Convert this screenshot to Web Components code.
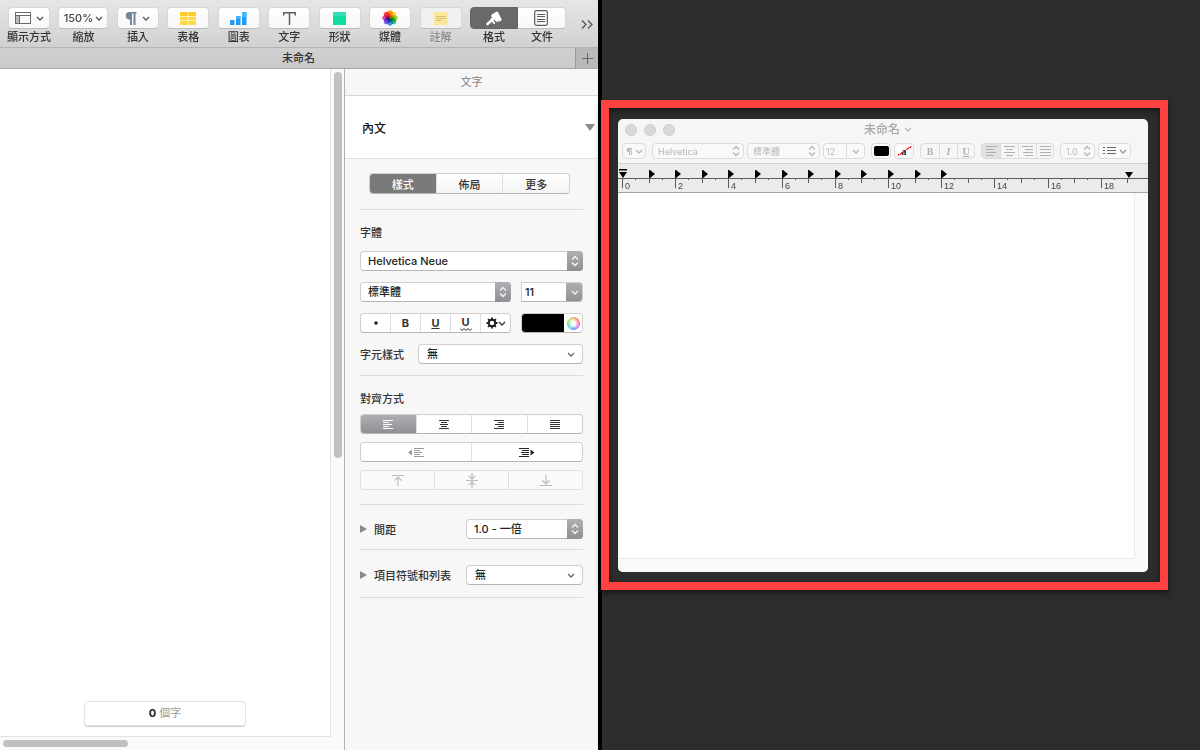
<!DOCTYPE html>
<html lang="zh-Hant">
<head>
<meta charset="utf-8">
<title>未命名</title>
<style>
  body {
    margin: 0;
    min-height: 100vh;
    display: grid;
    grid-template-columns: minmax(0, 1fr) minmax(0, 1fr);
    background: #2d2d2d;
    font-family: Inter, "Noto Sans CJK TC", sans-serif;
    font-size: 11px;
    color: #333;
    overflow: hidden;
  }
</style>
</head>
<body>

<pages-window></pages-window>
<desk-area>
  <highlight-frame>
    <text-window></text-window>
  </highlight-frame>
</desk-area>

<script>
const ICONS = {
  view: [16, 12, '<rect x=".5" y=".5" width="15" height="11" fill="none" stroke="#6a6a6a"/><path d="M1 3.500h14M4.500 4v7" stroke="#6a6a6a"/><rect x="1" y="4" width="3" height="7" fill="#bbb"/>'],
  chevron: [8, 5, '<path d="M1 1l3 3 3-3" fill="none" stroke="currentColor" stroke-width="1.300"/>'],
  updown: [8, 12, '<path d="M1 4.500l3-3 3 3M1 7.500l3 3 3-3" fill="none" stroke="currentColor" stroke-width="1.400"/>'],
  pilcrow: [12, 13, '<path d="M11.500 0H4.500a3.700 3.700 0 0 0 0 7.400H5V13h2V1.500h1.500V13h2V1.500h1z" fill="#74859a"/>'],
  pilcrowSmall: [6, 7, '<path d="M6 0H2.500a2 2 0 0 0 0 4H3v3h1V1h.8v6h.9V1H6z" fill="currentColor"/>'],
  table: [16, 13, '<rect width="16" height="13" fill="#ffd84a"/><rect width="16" height="4" fill="#ffc928"/><path d="M0 4.500h16M0 8.500h16M8 0v13" stroke="#fff3b5"/>'],
  chart: [17, 13, '<path d="M0 8h4.500v5H0zM6 4h4.500v9H6zM12 0h4.500v13H12z" fill="#219cf2"/><path d="M12 0h4.500v5H12zM6 4h4.500v3H6z" fill="#43b8fa"/>'],
  text: [13, 13, '<path d="M.7 3.500V.8h11.600v2.700M6.500 1v12" fill="none" stroke="#606060" stroke-width="1.500"/>'],
  shape: [13, 13, '<rect width="13" height="13" fill="#10dba0"/><path d="M0 0h13v4H0z" fill="#35dfb6"/>'],
  media: [16, 16, ['#ff9a1c', '#ffdc1f', '#9bd62e', '#2fbf7a', '#35a0f2', '#7a5ce8', '#d34fc4', '#fa3c4c'].map((c, i) =>
    `<ellipse cx="8" cy="4" rx="2.800" ry="3.700" fill="${c}" style="mix-blend-mode:multiply" transform="rotate(${i * 45} 8 8)"/>`).join('')],
  note: [14, 13, '<rect width="14" height="13" fill="#fde79a"/><path d="M2 4.500h10M2 6.500h10M2 8.500h6" stroke="#d3bf80"/>'],
  brush: [16, 15, '<path d="M8.300 6.800L5.500 9.500 1.500 13" fill="none" stroke="#fff" stroke-width="2.600" stroke-linecap="round"/><path d="M5.500 8l2.700 4.300" stroke="#fff" stroke-width="1.800" stroke-linecap="round"/><path d="M5.500 3.800L9.800.9q1.500-.8 2.400.5l3.500 7.200-.9 1.800-1.200-1.200-.1 2.100-1.700-1.500-.5 1.600-1.900-1.300L5 5.200z" fill="#fff"/>'],
  document: [14, 16, '<rect x=".7" y=".7" width="12.600" height="14.600" rx="1.500" fill="none" stroke="#5c5c5c" stroke-width="1.200"/><path d="M3 4.500h8M3 6.500h8M3 9.500h8M3 11.500h8" stroke="#5c5c5c"/>'],
  more: [12, 9, '<path d="M1 .5l4 4-4 4M7 .5l4 4-4 4" fill="none" stroke="#555" stroke-width="1.300"/>'],
  plus: [11, 11, '<path d="M5.500 0v11M0 5.500h11" stroke="#666"/>'],
  disclosure: [7, 8, '<path d="M0 0l7 4-7 4z" fill="#8a8a8a"/>'],
  styleArrow: [10, 7, '<path d="M0 0h10L5 7z" fill="#8b8b8b"/>'],
  dot: [4, 4, '<circle cx="2" cy="2" r="1.800" fill="#222"/>'],
  gear: [12, 12, '<circle cx="6" cy="6" r="3.200" fill="none" stroke="#1c1c1c" stroke-width="1.900"/><path d="M6 .5v2M6 9.500v2M.5 6h2M9.500 6h2M2.100 2.100l1.400 1.400M8.500 8.500l1.400 1.400M9.900 2.100L8.500 3.500M3.500 8.500l-1.400 1.400" stroke="#1c1c1c" stroke-width="1.800"/>'],
  wave: [12, 3, '<path d="M0 .5l2 2 2-2 2 2 2-2 2 2 2-2" fill="none" stroke="#222"/>'],
  left: [10, 9, '<path d="M0 .5h10M0 2.500h6M0 4.500h9M0 6.500h6M0 8.500h10" stroke="currentColor"/>'],
  center: [10, 9, '<path d="M0 .5h10M2 2.500h6M1 4.500h8M2 6.500h6M0 8.500h10" stroke="currentColor"/>'],
  right: [10, 9, '<path d="M0 .5h10M4 2.500h6M1 4.500h9M4 6.500h6M0 8.500h10" stroke="currentColor"/>'],
  justify: [10, 9, '<path d="M0 .5h10M0 2.500h10M0 4.500h10M0 6.500h10M0 8.500h10" stroke="currentColor"/>'],
  outdent: [16, 9, '<path d="M6 .5h10M6 2.500h6M6 4.500h8M6 6.500h6M6 8.500h10" stroke="#999"/><path d="M4 1.500v6l-4-3z" fill="#999"/>'],
  indent: [16, 9, '<path d="M0 .5h10M3 2.500h7M2 4.500h8M3 6.500h7M0 8.500h10" stroke="#222"/><path d="M11.500 1.500v6l4-3z" fill="#222"/>'],
  top: [12, 11, '<path d="M0 .5h12M6 11V2M2.500 5.500L6 2l3.500 3.500" fill="none" stroke="#bbb" stroke-width="1.200"/>'],
  middle: [12, 15, '<path d="M0 7.500h12M6 0v15M3 3l3 3 3-3M3 12l3-3 3 3" fill="none" stroke="#bbb" stroke-width="1.200"/>'],
  bottom: [12, 11, '<path d="M0 10.500h12M6 0v9M2.500 5.500L6 9l3.500-3.500" fill="none" stroke="#bbb" stroke-width="1.200"/>'],
  leftWide: [11, 10, '<path d="M0 .5h11M0 3.500h8M0 6.500h10M0 9.500h8" stroke="currentColor"/>'],
  centerWide: [11, 10, '<path d="M0 .5h11M2 3.500h7M0 6.500h11M2 9.500h7" stroke="currentColor"/>'],
  rightWide: [11, 10, '<path d="M0 .5h11M3 3.500h8M1 6.500h10M3 9.500h8" stroke="currentColor"/>'],
  justifyWide: [11, 10, '<path d="M0 .5h11M0 3.500h11M0 6.500h11M0 9.500h11" stroke="currentColor"/>'],
  list: [13, 8, '<path d="M0 .5h2M4 .5h9M0 3.500h2M4 3.500h9M0 6.500h2M4 6.500h9" stroke="#666" stroke-width="1.200"/>']
};

class MacIcon extends HTMLElement {
  connectedCallback() {
    const [w, h, body] = ICONS[this.getAttribute('name')];
    this.attachShadow({ mode: 'open' }).innerHTML = `
      <style>
        :host { display: inline-flex; flex: none; }
        svg { display: block; }
      </style>
      <svg width="${w}" height="${h}" viewBox="0 0 ${w} ${h}" aria-hidden="true">${body}</svg>
    `;
  }
}
customElements.define('mac-icon', MacIcon);

// Toolbar button: a white face with the icon, label underneath
class ToolButton extends HTMLElement {
  connectedCallback() {
    this.attachShadow({ mode: 'open' }).innerHTML = `
      <style>
        :host { display: block; width: 42px; flex: none; }
        :host([wide]) { width: 50px; }
        :host([side]) { width: 48px; }
        button {
          display: block;
          width: 100%;
          padding: 0;
          border: 0;
          background: none;
          font: inherit;
          color: inherit;
        }
        .face {
          box-sizing: border-box;
          display: flex;
          align-items: center;
          justify-content: center;
          gap: 5px;
          height: 22px;
          border: 1px solid #d6d6d6;
          border-bottom-color: #bdbdbd;
          border-radius: 4px;
          background: linear-gradient(#fff, #f7f7f7);
          color: #555;
        }
        :host([wide]) .face { gap: 2px; }
        :host([side="left"]) .face {
          border-color: #666;
          border-radius: 4px 0 0 4px;
          background: #696969;
        }
        :host([side="right"]) .face { border-left: 0; border-radius: 0 4px 4px 0; }
        .label {
          display: flex;
          justify-content: center;
          margin-top: 1px;
          line-height: 14px;
          font-weight: 500;
          white-space: nowrap;
        }
        :host([dimmed]) .label { color: #8c8c8c; }
        :host([dimmed]) .face { background: #f1f1f1; }
      </style>
      <button type="button">
        <span class="face"><slot name="face"></slot></span>
        <span class="label"><slot></slot></span>
      </button>
    `;
  }
}
customElements.define('tool-button', ToolButton);

class PagesToolbar extends HTMLElement {
  connectedCallback() {
    this.attachShadow({ mode: 'open' }).innerHTML = `
      <style>
        :host {
          display: flex;
          align-items: flex-start;
          gap: 15px;
          height: 40px;
          padding: 7px 5px 0 8px;
          border-bottom: 1px solid #b3b3b3;
          background: linear-gradient(#e6e6e6, #d1d1d1);
        }
        .items { flex: 1; display: flex; justify-content: space-between; }
        .pair { display: flex; }
        .zoom { font-weight: 500; color: #444; }
        .overflow { padding: 0; border: 0; background: none; margin-top: 13px; display: flex; }
      </style>
      <div class="items">
        <tool-button><mac-icon slot="face" name="view"></mac-icon><mac-icon slot="face" name="chevron"></mac-icon>顯示方式</tool-button>
        <tool-button wide><span slot="face" class="zoom">150%</span><mac-icon slot="face" name="chevron"></mac-icon>縮放</tool-button>
        <tool-button><mac-icon slot="face" name="pilcrow"></mac-icon><mac-icon slot="face" name="chevron"></mac-icon>插入</tool-button>
        <tool-button><mac-icon slot="face" name="table"></mac-icon>表格</tool-button>
        <tool-button><mac-icon slot="face" name="chart"></mac-icon>圖表</tool-button>
        <tool-button><mac-icon slot="face" name="text"></mac-icon>文字</tool-button>
        <tool-button><mac-icon slot="face" name="shape"></mac-icon>形狀</tool-button>
        <tool-button><mac-icon slot="face" name="media"></mac-icon>媒體</tool-button>
        <tool-button dimmed><mac-icon slot="face" name="note"></mac-icon>註解</tool-button>
        <div class="pair">
          <tool-button side="left"><mac-icon slot="face" name="brush"></mac-icon>格式</tool-button>
          <tool-button side="right"><mac-icon slot="face" name="document"></mac-icon>文件</tool-button>
        </div>
      </div>
      <button class="overflow" type="button" aria-label="更多項目"><mac-icon name="more"></mac-icon></button>
    `;
  }
}
customElements.define('pages-toolbar', PagesToolbar);

class PagesTabs extends HTMLElement {
  connectedCallback() {
    this.attachShadow({ mode: 'open' }).innerHTML = `
      <style>
        :host {
          display: flex;
          height: 20px;
          border-bottom: 1px solid #a8a8a8;
          background: linear-gradient(#d0d0d0, #cbcbcb);
          line-height: 20px;
          font-weight: 500;
        }
        .tab { flex: 1; padding-left: 22px; text-align: center; }
        button {
          display: flex;
          align-items: center;
          justify-content: center;
          width: 23px;
          padding: 0;
          border: 0;
          border-left: 1px solid #999;
          background: #b9b9b9;
        }
      </style>
      <span class="tab">未命名</span>
      <button type="button" aria-label="新增標籤頁"><mac-icon name="plus"></mac-icon></button>
    `;
  }
}
customElements.define('pages-tabs', PagesTabs);

class PageCanvas extends HTMLElement {
  connectedCallback() {
    this.attachShadow({ mode: 'open' }).innerHTML = `
      <style>
        :host {
          display: grid;
          grid-template: minmax(0, 1fr) 13px / minmax(0, 1fr) 13px;
          background: #fafafa;
        }
        .page {
          display: flex;
          align-items: flex-end;
          justify-content: center;
          border: solid #e3e3e3;
          border-width: 0 1px 1px 0;
          padding-bottom: 10px;
          background: #fff;
        }
        .count {
          box-sizing: border-box;
          width: 49%;
          border: 1px solid #e2e2e2;
          border-radius: 4px;
          box-shadow: 0 1px 1px #ccc;
          text-align: center;
          line-height: 23px;
          color: #999;
        }
        b { color: #222; }
        .bar-y { padding: 3px 2px 0 3px; }
        .bar-x { padding: 3px 0 3px 3px; }
        .thumb { border-radius: 4px; background: #c1c1c1; }
        .bar-y .thumb { height: 58%; width: 8px; }
        .bar-x .thumb { height: 7px; width: 38%; }
      </style>
      <div class="page"><div class="count"><b>0</b> 個字</div></div>
      <div class="bar-y"><div class="thumb"></div></div>
      <div class="bar-x"><div class="thumb"></div></div>
    `;
  }
}
customElements.define('page-canvas', PageCanvas);

// Pop-up menu. variant "cap" has a grey arrow cap, "plain" only a chevron
class PopUp extends HTMLElement {
  connectedCallback() {
    const cap = this.getAttribute('variant') === 'cap';
    this.attachShadow({ mode: 'open' }).innerHTML = `
      <style>
        :host { display: grid; grid-template-columns: minmax(0, 1fr) 16px; height: 20px; }
        select {
          grid-area: 1 / 1 / 2 / 3;
          appearance: none;
          box-sizing: border-box;
          width: 100%;
          padding: 0 18px 0 7px;
          border: 1px solid #cfcfcf;
          border-bottom-color: #b5b5b5;
          border-radius: 4px;
          background: #fff;
          font: inherit;
          color: #222;
        }
        :host([variant="plain"]) select { padding-left: 8px; }
        .arrow {
          grid-area: 1 / 2;
          display: flex;
          align-items: center;
          justify-content: center;
          pointer-events: none;
          color: #666;
        }
        :host([variant="plain"]) .arrow { padding-right: 8px; }
        :host([variant="cap"]) .arrow {
          border-radius: 0 4px 4px 0;
          background: linear-gradient(#b0b0b4, #8e8e93);
          color: #f4f4f4;
        }
      </style>
      <select aria-label="${this.getAttribute('label')}"><option>${this.getAttribute('value')}</option></select>
      <span class="arrow"><mac-icon name="${cap ? 'updown' : 'chevron'}"></mac-icon></span>
    `;
  }
}
customElements.define('pop-up', PopUp);

// Row of joined buttons, passed in as slotted <button>s
class SegmentRow extends HTMLElement {
  connectedCallback() {
    this.attachShadow({ mode: 'open' }).innerHTML = `
      <style>
        :host {
          box-sizing: border-box;
          display: flex;
          height: 20px;
          border: 1px solid #cfcfcf;
          border-bottom-color: #b5b5b5;
          border-radius: 4px;
          background: #fff;
          overflow: hidden;
        }
        :host([tabs]) { height: 21px; background: linear-gradient(#fff, #f4f4f4); }
        :host([dimmed]) { border-color: #e0e0e0; background: #fafafa; }
        ::slotted(button) {
          flex: 1 1 0;
          display: flex;
          align-items: center;
          justify-content: center;
          min-width: 0;
          padding: 0;
          border: 0;
          border-left: 1px solid #dedede;
          background: none;
          font: inherit;
          color: #333;
        }
        ::slotted(button:first-child) { border-left: 0; }
        ::slotted(button.on) {
          margin: -1px 0 -1px -1px;
          padding-left: 1px;
          background: linear-gradient(#b0b0b4, #8e8e93);
          color: #fff;
        }
        :host([tabs]) ::slotted(button.on) { background: #7a7a7a; }
      </style>
      <slot></slot>
    `;
  }
}
customElements.define('segment-row', SegmentRow);

class FormatInspector extends HTMLElement {
  connectedCallback() {
    this.attachShadow({ mode: 'open' }).innerHTML = `
      <style>
        :host { display: block; background: #f7f7f7; border-left: 1px solid #b0b0b0; }
        header {
          height: 26px;
          line-height: 26px;
          border-bottom: 1px solid #d6d6d6;
          text-align: center;
          color: #7c7c7c;
        }
        .style {
          display: flex;
          align-items: center;
          justify-content: space-between;
          height: 62px;
          padding: 0 3px 0 17px;
          border-bottom: 1px solid #e2e2e2;
          background: #fff;
          font-size: 12px;
          font-weight: 500;
          color: #111;
        }
        section {
          display: flex;
          flex-direction: column;
          margin: 0 15px;
          border-bottom: 1px solid #dcdcdc;
          font-weight: 500;
        }
        .tabs { padding: 14px 13px 15px 9px; }
        .font { gap: 11px; padding: 14px 0 11px; }
        .align { gap: 8px; padding: 14px 0; }
        .spacing { padding: 14px 0 10px; }
        .lists { padding: 15px 0 12px; }
        h2 { margin: 0 0 -2px; font-size: 11px; font-weight: 500; line-height: 18px; }
        .row { display: grid; grid-template-columns: minmax(0, 1fr) 62px; gap: 10px; }
        .pair { display: flex; align-items: center; gap: 14px; }
        .pair pop-up { flex: 1; }
        .fold { display: grid; grid-template-columns: minmax(0, 1fr) 117px; align-items: center; }
        .fold button {
          display: flex;
          align-items: center;
          gap: 7px;
          padding: 0;
          border: 0;
          background: none;
          font: inherit;
          color: inherit;
        }
        .combo, .color {
          box-sizing: border-box;
          display: flex;
          height: 20px;
          border: 1px solid #cfcfcf;
          border-bottom-color: #b5b5b5;
          border-radius: 0 4px 4px 0;
          background: #fff;
          overflow: hidden;
        }
        .combo input {
          flex: 1;
          min-width: 0;
          padding: 0 3px;
          border: 0;
          font: inherit;
          color: #222;
        }
        .combo button {
          display: flex;
          align-items: center;
          justify-content: center;
          width: 17px;
          margin: -1px;
          padding: 0;
          border: 0;
          background: linear-gradient(#b0b0b4, #8e8e93);
          color: #f4f4f4;
        }
        .color { border-radius: 4px; }
        .color button { padding: 0; border: 0; }
        .well { flex: 1; margin: -1px 0 -1px -1px; background: #000; }
        .picker { display: flex; align-items: center; justify-content: center; width: 18px; background: #fff; }
        .wheel {
          width: 13px;
          height: 13px;
          border-radius: 50%;
          background: radial-gradient(#fff 20%, #fff0 70%),
            conic-gradient(#f6a05a, #ff6b5a, #ff4fa8, #d05cff, #4a90ff, #35e0e0, #57e06a, #b8e04d, #f6a05a);
        }
        .under { text-decoration: underline; }
        .wavy { display: flex; flex-direction: column; align-items: center; line-height: 11px; padding-top: 2px; }
        .gear { display: flex; align-items: center; gap: 0; }
        b { font-size: 11px; font-weight: 700; }
      </style>
      <header>文字</header>
      <div class="style"><span>內文</span><mac-icon name="styleArrow"></mac-icon></div>

      <section class="tabs">
        <segment-row tabs>
          <button type="button" class="on">樣式</button>
          <button type="button">佈局</button>
          <button type="button">更多</button>
        </segment-row>
      </section>

      <section class="font">
        <h2>字體</h2>
        <pop-up variant="cap" label="字體" value="Helvetica Neue"></pop-up>
        <div class="row">
          <pop-up variant="cap" label="字體樣式" value="標準體"></pop-up>
          <div class="combo">
            <input type="text" value="11" aria-label="字級">
            <button type="button" aria-label="選擇字級"><mac-icon name="chevron"></mac-icon></button>
          </div>
        </div>
        <div class="row">
          <segment-row>
            <button type="button" aria-label="無"><mac-icon name="dot"></mac-icon></button>
            <button type="button"><b>B</b></button>
            <button type="button"><b class="under">U</b></button>
            <button type="button"><b class="wavy">U<mac-icon name="wave"></mac-icon></b></button>
            <button type="button" aria-label="進階選項"><span class="gear"><mac-icon name="gear"></mac-icon><mac-icon name="chevron"></mac-icon></span></button>
          </segment-row>
          <div class="color">
            <button type="button" class="well" aria-label="文字顏色"></button>
            <button type="button" class="picker" aria-label="色盤"><span class="wheel"></span></button>
          </div>
        </div>
        <div class="pair"><span>字元樣式</span><pop-up variant="plain" label="字元樣式" value="無"></pop-up></div>
      </section>

      <section class="align">
        <h2>對齊方式</h2>
        <segment-row>
          <button type="button" class="on" aria-label="靠左"><mac-icon name="left"></mac-icon></button>
          <button type="button" aria-label="置中"><mac-icon name="center"></mac-icon></button>
          <button type="button" aria-label="靠右"><mac-icon name="right"></mac-icon></button>
          <button type="button" aria-label="左右對齊"><mac-icon name="justify"></mac-icon></button>
        </segment-row>
        <segment-row>
          <button type="button" aria-label="減少縮排"><mac-icon name="outdent"></mac-icon></button>
          <button type="button" aria-label="增加縮排"><mac-icon name="indent"></mac-icon></button>
        </segment-row>
        <segment-row dimmed>
          <button type="button" aria-label="靠上"><mac-icon name="top"></mac-icon></button>
          <button type="button" aria-label="中間"><mac-icon name="middle"></mac-icon></button>
          <button type="button" aria-label="靠下"><mac-icon name="bottom"></mac-icon></button>
        </segment-row>
      </section>

      <section class="spacing">
        <div class="fold">
          <button type="button"><mac-icon name="disclosure"></mac-icon>間距</button>
          <pop-up variant="cap" label="間距" value="1.0 - 一倍"></pop-up>
        </div>
      </section>

      <section class="lists">
        <div class="fold">
          <button type="button"><mac-icon name="disclosure"></mac-icon>項目符號和列表</button>
          <pop-up variant="plain" label="項目符號和列表" value="無"></pop-up>
        </div>
      </section>
    `;
  }
}
customElements.define('format-inspector', FormatInspector);

class PagesWindow extends HTMLElement {
  connectedCallback() {
    this.attachShadow({ mode: 'open' }).innerHTML = `
      <style>
        :host {
          display: flex;
          flex-direction: column;
          margin-right: -2px;
          border-right: 4px solid #000;
          background: #fff;
        }
        .body { flex: 1; display: grid; grid-template-columns: minmax(0, 1fr) 254px; }
      </style>
      <pages-toolbar></pages-toolbar>
      <pages-tabs></pages-tabs>
      <div class="body">
        <page-canvas></page-canvas>
        <format-inspector></format-inspector>
      </div>
    `;
  }
}
customElements.define('pages-window', PagesWindow);

class DeskArea extends HTMLElement {
  connectedCallback() {
    this.attachShadow({ mode: 'open' }).innerHTML = `
      <style>
        :host { display: block; padding: 100px 32px 0 1px; }
      </style>
      <slot></slot>
    `;
  }
}
customElements.define('desk-area', DeskArea);

class HighlightFrame extends HTMLElement {
  connectedCallback() {
    this.attachShadow({ mode: 'open' }).innerHTML = `
      <style>
        :host {
          position: relative;
          display: block;
          padding: 11px 12px 10px 9px;
          border: 8px solid #fe4141;
          box-shadow: 0 3px 6px rgba(0, 0, 0, 0.5), inset 0 3px 6px rgba(0, 0, 0, 0.5);
        }
      </style>
      <slot></slot>
    `;
  }
}
customElements.define('highlight-frame', HighlightFrame);

class TabRuler extends HTMLElement {
  connectedCallback() {
    const start = 4;
    const unit = 26.6;
    let marks = '';
    for (let n = 0; n <= 19; n++) {
      const x = Math.round(start + n * unit);
      const even = n % 2 === 0;
      marks += `<rect class="tick" x="${x}" y="14" width="1" height="${even ? 10 : 5}"/>`;
      if (n < 19) marks += `<rect class="tick" x="${x + 13}" y="15" width="1" height="1"/>`;
      if (even) marks += `<text x="${x + 3}" y="25">${n}</text>`;
      if (n > 0 && n < 13) marks += `<path d="M${x} 6h1l5 4-5 4h-1z"/>`;
    }
    this.attachShadow({ mode: 'open' }).innerHTML = `
      <style>
        :host {
          display: block;
          border-top: 1px solid #cfcfcf;
          border-bottom: 1px solid #a5a5a5;
          background: #ebebeb;
        }
        svg { display: block; width: 100%; height: 28px; }
        .tick { fill: #5c5c5c; }
        text { font: 9px "Liberation Sans", sans-serif; fill: #444; }
      </style>
      <svg>
        <rect class="tick" y="14" width="100%" height="1"/>
        ${marks}
        <path d="M1 5h8v1.500H1zM1 8h8l-4 6z"/>
        <path d="M507 8h8l-4 6z"/>
      </svg>
    `;
  }
}
customElements.define('tab-ruler', TabRuler);

class TextWindow extends HTMLElement {
  connectedCallback() {
    this.attachShadow({ mode: 'open' }).innerHTML = `
      <style>
        :host {
          display: block;
          border-radius: 5px;
          background: #f6f6f6;
          color: #b8b8b8;
          font-size: 9px;
          overflow: hidden;
        }
        header { display: grid; grid-template-columns: 1fr auto 1fr; align-items: center; gap: 4px; height: 21px; padding: 0 9px 0 7px; }
        .lights { display: flex; gap: 7px; }
        .lights i { box-sizing: border-box; width: 12px; height: 12px; border: 1px solid #ccc; border-radius: 50%; background: #d9d9d9; }
        h1 { margin: 0; font-size: 12px; line-height: 20px; font-weight: 500; color: #a8a8a8; }
        .bar { display: flex; gap: 6px; padding: 3px 4px 4px; height: 16px; }
        .group { display: flex; gap: 3px; }
        .box {
          box-sizing: border-box;
          display: flex;
          align-items: center;
          justify-content: center;
          gap: 3px;
          height: 16px;
          padding: 0;
          border: 1px solid #dcdcdc;
          border-radius: 4px;
          background: #f9f9f9;
          font: inherit;
          color: inherit;
          overflow: hidden;
        }
        .menu { display: grid; grid-template-columns: minmax(0, 1fr) 14px; justify-items: center; gap: 0; }
        select, input {
          box-sizing: border-box;
          width: 100%;
          height: 14px;
          padding: 0 5px;
          border: 0;
          appearance: none;
          background: none;
          font: inherit;
          color: inherit;
        }
        select { grid-area: 1 / 1 / 2 / 3; }
        .menu mac-icon { grid-area: 1 / 2; pointer-events: none; }
        .p { width: 24px; }
        .family { width: 92px; }
        .face { width: 73px; }
        .size { width: 42px; justify-content: stretch; gap: 0; }
        .size input { flex: 1; min-width: 0; padding: 0 2px; }
        .size button { display: flex; align-items: center; justify-content: center; width: 18px; height: 14px; padding: 0; border: 0; border-left: 1px solid #dcdcdc; background: none; color: inherit; }
        .well { width: 20px; }
        .well span { flex: none; width: 15px; height: 10px; border-radius: 2px; background: #000; }
        .well .none {
          display: flex;
          align-items: center;
          justify-content: center;
          background: linear-gradient(146deg, #fff0 46%, #f33 46%, #f33 54%, #fff0 54%), #fff;
          font: bold 10px "Liberation Serif", serif;
          color: #222;
        }
        .seg { display: flex; box-sizing: border-box; height: 16px; border: 1px solid #dcdcdc; border-radius: 4px; overflow: hidden; }
        .seg button {
          display: flex;
          align-items: center;
          justify-content: center;
          box-sizing: border-box;
          width: 18px;
          padding: 0;
          border: 0;
          border-left: 1px solid #dcdcdc;
          background: none;
          font: bold 10px "Liberation Serif", serif;
          color: #b0b0b0;
        }
        .seg button:first-child { border-left: 0; }
        .seg button:last-child { width: 17px; }
        .seg .on { background: #e2e2e2; }
        .line { width: 35px; }
        .list { width: 33px; }
        .list mac-icon:last-child { color: #999; }
        .page { display: flex; padding: 0 13px 13px 0; background: #fafafa; }
        textarea {
          flex: 1;
          box-sizing: border-box;
          height: 366px;
          padding: 4px 5px;
          border: solid #ececec;
          border-width: 0 1px 1px 0;
          background: #fff;
          resize: none;
          font: 12px "Liberation Sans", "Noto Sans CJK TC", sans-serif;
        }
      </style>
      <header>
        <div class="lights"><i></i><i></i><i></i></div>
        <h1>未命名</h1>
        <mac-icon name="chevron"></mac-icon>
      </header>
      <div class="bar">
        <button type="button" class="box p" aria-label="段落樣式"><mac-icon name="pilcrowSmall"></mac-icon><mac-icon name="chevron"></mac-icon></button>
        <div class="group">
          <div class="box menu family"><select aria-label="字體"><option>Helvetica</option></select><mac-icon name="updown"></mac-icon></div>
          <div class="box menu face"><select aria-label="字體樣式"><option>標準體</option></select><mac-icon name="updown"></mac-icon></div>
          <div class="box size"><input type="text" value="12" aria-label="字級"><button type="button" aria-label="選擇字級"><mac-icon name="chevron"></mac-icon></button></div>
        </div>
        <div class="group">
          <button type="button" class="box well" aria-label="文字顏色"><span></span></button>
          <button type="button" class="box well" aria-label="背景顏色"><span class="none">a</span></button>
        </div>
        <div class="seg">
          <button type="button">B</button>
          <button type="button"><i>I</i></button>
          <button type="button"><u>U</u></button>
        </div>
        <div class="seg">
          <button type="button" class="on" aria-label="靠左"><mac-icon name="leftWide"></mac-icon></button>
          <button type="button" aria-label="置中"><mac-icon name="centerWide"></mac-icon></button>
          <button type="button" aria-label="靠右"><mac-icon name="rightWide"></mac-icon></button>
          <button type="button" aria-label="左右對齊"><mac-icon name="justifyWide"></mac-icon></button>
        </div>
        <div class="group">
          <div class="box menu line"><select aria-label="行距"><option>1.0</option></select><mac-icon name="updown"></mac-icon></div>
          <button type="button" class="box list" aria-label="列表"><mac-icon name="list"></mac-icon><mac-icon name="chevron"></mac-icon></button>
        </div>
      </div>
      <tab-ruler></tab-ruler>
      <div class="page"><textarea aria-label="未命名"></textarea></div>
    `;
  }
}
customElements.define('text-window', TextWindow);
</script>
</body>
</html>
